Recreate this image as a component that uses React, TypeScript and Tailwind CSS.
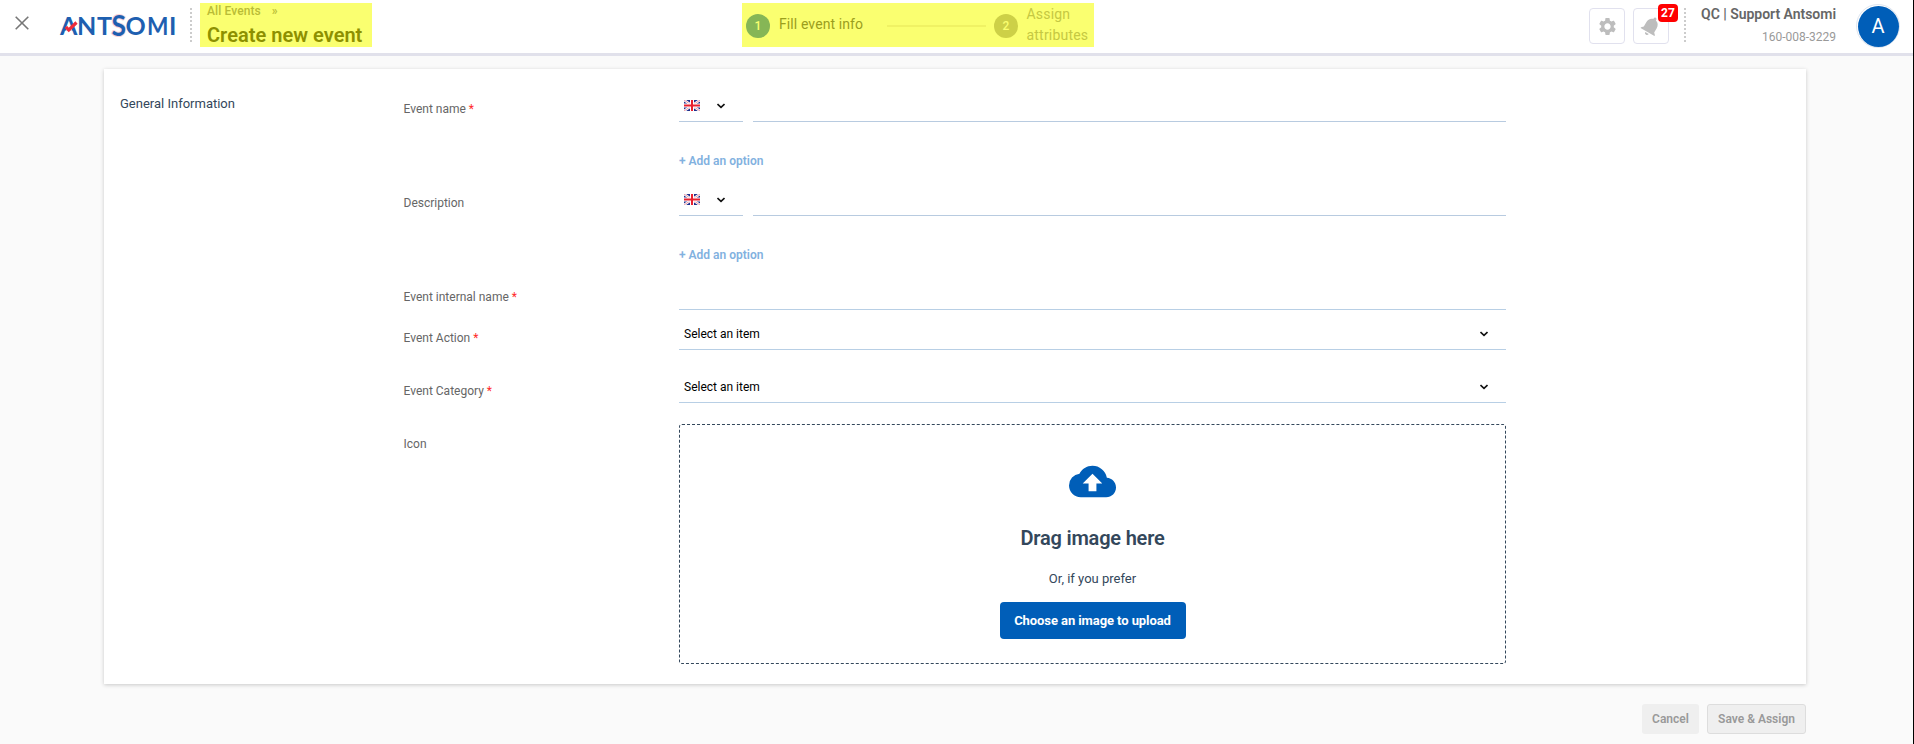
import React from 'react';
import { MdSettings, MdNotifications, MdCloudUpload } from 'react-icons/md';

function Chevron() {
  return (
    <svg width="8" height="6" viewBox="0 0 8 6" fill="none" className="shrink-0">
      <path d="M0.5 1 L4 4.4 L7.5 1" stroke="#111" strokeWidth="1.6" />
    </svg>
  );
}

function Flag() {
  return (
    <svg width="16" height="11" viewBox="0 0 16 11" className="shrink-0">
      <rect width="16" height="11" fill="#1f2f8c" />
      <path d="M0 0 L16 11 M16 0 L0 11" stroke="#fff" strokeWidth="2.4" />
      <path d="M0 0 L16 11 M16 0 L0 11" stroke="#e0566a" strokeWidth="0.6" />
      <path d="M8 0 V11 M0 5.5 H16" stroke="#fff" strokeWidth="4" />
      <path d="M8 0 V11 M0 5.5 H16" stroke="#e8202f" strokeWidth="2" />
    </svg>
  );
}

function Logo() {
  return (
    <svg width="118" height="40" viewBox="0 0 118 40" className="shrink-0 overflow-visible">
      <g fontFamily="Lato, sans-serif" fontSize="25" fontWeight="700" fill="#1e5fb0">
        <text x="0" y="28.5">A</text>
        <path d="M6 20.2 H12 V24.6 H6 Z" fill="#fff" />
        <text x="17" y="28.5">N</text>
        <text x="37" y="28.5">T</text>
        <text x="51.5" y="29.8" fontSize="29" textLength="14.5" lengthAdjust="spacingAndGlyphs" stroke="#f8d3d8" strokeWidth="2" paintOrder="stroke">S</text>
        <text x="65.5" y="28.5">O</text>
        <text x="87" y="28.5" textLength="21.5" lengthAdjust="spacingAndGlyphs">M</text>
        <text x="109" y="28.5">I</text>
      </g>
      <path d="M5.8 20.8 L8.8 24 L16.5 16.5" stroke="#ee2b3b" strokeWidth="3.2" fill="none" />
    </svg>
  );
}

function Field({ label, required, className, labelClass, children }: {
  label: string; required?: boolean; className: string; labelClass: string; children: React.ReactNode;
}) {
  return (
    <div className={`flex ${className}`}>
      <div className={`w-[275.5px] shrink-0 text-[12px] leading-4 text-[#666] ${labelClass}`}>
        {label}
        {required && <span className="text-[#ff2a2a]"> *</span>}
      </div>
      <div className="w-[827px] shrink-0">{children}</div>
    </div>
  );
}

function Localized() {
  return (
    <>
      <div className="flex h-8 gap-[10px]">
        <div className="flex w-16 items-center gap-[17px] border-b border-[#b8cbe0] pl-[5px]">
          <Flag />
          <Chevron />
        </div>
        <div className="flex-1 border-b border-[#b8cbe0]" />
      </div>
      <button className="mt-[31px] block text-[12px] font-semibold leading-4 text-[#82b1e0]">+ Add an option</button>
    </>
  );
}

function SelectBox() {
  return (
    <div className="flex h-8 items-center justify-between border-b border-[#b8cfe5] pr-[18px] pl-[5px] text-[12px] leading-4 text-black">
      <span>Select an item</span>
      <Chevron />
    </div>
  );
}

export default function App() {
  return (
    <div className="flex h-[744px] w-[1914px] flex-col overflow-hidden border-r border-black bg-[#fafafa] font-['Roboto',sans-serif]">
      <header className="flex h-14 shrink-0 border-b-[3px] border-[#e1e1eb] bg-white">
        <svg width="14" height="14" viewBox="0 0 14 14" className="mt-4 ml-[15px] shrink-0">
          <path d="M0.7 0.7 L13.3 13.3 M13.3 0.7 L0.7 13.3" stroke="#777" strokeWidth="1.6" />
        </svg>
        <div className="mt-[6px] ml-[31px] w-[118px]"><Logo /></div>
        <div className="mt-2 ml-[12px] h-[35px] w-[2px] bg-[repeating-linear-gradient(to_bottom,#ccc_0px,#ccc_2px,transparent_2px,transparent_4px)]" />
        <div className="mt-[3px] ml-2 h-11 w-[172px] shrink-0 bg-[#faff70] pl-[7px]">
          <div className="flex gap-[11px] text-[12px] font-medium leading-4 text-[#b9bc36]"><span className="tracking-[0.1px]">All Events</span><span>»</span></div>
          <div className="mt-[4px] text-[20px] font-semibold leading-6 tracking-[0.03px] text-[#8d9000]">Create new event</div>
        </div>
        <div className="mt-[3px] ml-[370px] flex h-11 w-[352px] shrink-0 bg-[#faff70] pl-1">
          <div className="mt-[11px] flex size-6 items-center justify-center rounded-full bg-[#86b656] text-[12px] font-medium text-[#faff70]">1</div>
          <div className="mt-3 ml-[9px] w-[108px] text-[14px] leading-[19px] tracking-[0.1px] text-[#9b9e1d]">Fill event info</div>
          <div className="mt-[22px] h-[2px] w-[99px] bg-[#f0f264]" />
          <div className="mt-[11px] ml-2 flex size-6 items-center justify-center rounded-full bg-[#cdd047] text-[12px] font-medium text-[#faff70]">2</div>
          <div className="mt-px ml-[8.5px] text-[14px] leading-[21px] tracking-[0.2px] text-[#c5c842]">Assign<br />attributes</div>
        </div>
        <div className="ml-auto flex">
          <button className="mt-2 flex size-9 items-center justify-center rounded-[4px] border border-[#e1e1ee] text-[#bdbdbd]"><MdSettings size={21} /></button>
          <button className="relative mt-2 ml-2 flex size-9 items-center justify-center rounded-[4px] border border-[#e1e1ee] text-[#bdbdbd]">
            <MdNotifications size={24} className="rotate-[30deg]" />
            <span className="absolute -top-[5px] left-6 flex h-[18px] w-5 items-center justify-center rounded-[4px] bg-[#f00] text-[12px] font-bold text-white">27</span>
          </button>
          <div className="mt-2 ml-[15px] h-[35px] w-[2px] bg-[repeating-linear-gradient(to_bottom,#ccc_0px,#ccc_2px,transparent_2px,transparent_4px)]" />
          <div className="ml-[14px] flex w-[136px] flex-col items-end whitespace-nowrap">
            <div className="mt-[6px] text-[14px] font-semibold leading-4 tracking-[-0.03px] text-[#666]">QC | Support Antsomi</div>
            <div className="mt-[7px] text-[12px] leading-4 text-[#999]">160-008-3229</div>
          </div>
          <div className="mt-1 mr-[13px] ml-5 flex size-11 items-center justify-center rounded-full border border-[#dfe6f0] bg-white">
            <div className="flex size-[41px] items-center justify-center rounded-full bg-[#005eb8] text-[20px] text-white">A</div>
          </div>
        </div>
      </header>
      <main className="mt-[13px] ml-[104px] flex h-[615px] w-[1702px] shrink-0 bg-white pt-[21px] pl-4 shadow-[0_1px_4px_rgba(0,0,0,0.2)]">
        <h2 className="mt-[6px] w-[283.5px] shrink-0 text-[13px] leading-4 text-[#33475b]">General Information</h2>
        <div>
          <Field label="Event name" required className="h-[94px]" labelClass="pt-[11px]"><Localized /></Field>
          <Field label="Description" className="h-[94px]" labelClass="pt-[11px]"><Localized /></Field>
          <Field label="Event internal name" required className="h-8" labelClass="pt-[11px]"><div className="h-8 border-b border-[#b8cfe5]" /></Field>
          <Field label="Event Action" required className="h-10" labelClass="pt-5"><div className="pt-2"><SelectBox /></div></Field>
          <Field label="Event Category" required className="h-[53px]" labelClass="pt-[33px]"><div className="pt-[21px]"><SelectBox /></div></Field>
          <Field label="Icon" className="h-[261px]" labelClass="pt-[33px]">
            <div className="mt-[21px] flex h-60 flex-col items-center rounded-[3px] border border-dashed border-[#33475b] text-[#33475b]">
              <MdCloudUpload size={47} className="mt-[33px] shrink-0 text-[#005eb8]" />
              <div className="mt-[21px] text-[20px] font-semibold leading-6 tracking-[-0.2px]">Drag image here</div>
              <div className="mt-[21px] text-[13px] leading-4">Or, if you prefer</div>
              <button className="mt-[15px] h-[37px] w-[186px] rounded-[4px] bg-[#005eb8] text-[13px] font-bold tracking-[-0.08px] text-white">Choose an image to upload</button>
            </div>
          </Field>
        </div>
      </main>
      <footer className="mt-5 mr-[107px] flex justify-end gap-2 text-[12px] font-semibold text-[#999]">
        <button className="h-[30px] w-[57px] rounded-[3px] bg-[#efefef]">Cancel</button>
        <button className="h-[30px] w-[99px] rounded-[3px] border border-[#ddd] bg-[#efefef]">Save &amp; Assign</button>
      </footer>
    </div>
  );
}
